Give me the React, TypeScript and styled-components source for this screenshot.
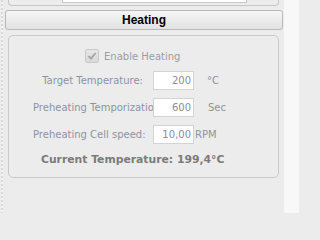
import React from "react";
import styled, { createGlobalStyle } from "styled-components";

const Global = createGlobalStyle`
  html, body { margin: 0; padding: 0; background: #ececec; }
  body { width: 299px; height: 213px; overflow: hidden; font-family: "DejaVu Sans", "Liberation Sans", sans-serif; }
`;

const Screen = styled.div`
  display: flex;
  width: 299px;
  height: 213px;
`;

const DottedStrip = styled.div`
  width: 4px;
  flex: none;
  background-image: repeating-linear-gradient(
    to bottom,
    #d8d8d8 0px,
    #d8d8d8 2px,
    #f4f4f4 2px,
    #f4f4f4 4px
  );
  background-size: 2px 4px;
  background-repeat: repeat-y;
  background-position: 1px 0;
`;

const Main = styled.div`
  width: 280px;
  flex: none;
  display: flex;
  flex-direction: column;
  background: #ececec;
`;

const RightStrip = styled.div`
  flex: 1;
  background: #f8f8f8;
`;

const TopPanel = styled.div`
  margin-left: 4px;
  width: 269px;
  height: 5px;
  border: 1px solid #c6c6c6;
  border-top: none;
  border-radius: 0 0 4px 4px;
  display: flex;
`;

const TopField = styled.div`
  margin-left: 53px;
  width: 183px;
  height: 2px;
  background: #fff;
  border: 1px solid #c8c8c8;
  border-top: none;
`;

const HeaderButton = styled.div`
  margin-top: 4px;
  margin-left: 1px;
  width: 276px;
  height: 18px;
  border: 1px solid #b9b9b9;
  border-radius: 3px;
  background: linear-gradient(to bottom, #f6f6f6 0%, #ececec 50%, #e2e2e2 100%);
  display: flex;
  align-items: center;
  justify-content: center;
  font-family: "Liberation Sans", Arial, sans-serif;
  font-weight: bold;
  font-size: 12px;
  color: #000;
`;

const Group = styled.div`
  margin-top: 5px;
  margin-left: 4px;
  width: 269px;
  height: 141px;
  border: 1px solid #c9c9c9;
  border-radius: 5px;
  display: flex;
  flex-direction: column;
  align-items: stretch;
`;

const CheckRow = styled.label`
  margin-top: 13px;
  margin-left: 76px;
  display: flex;
  align-items: center;
  gap: 5px;
  font-size: 10px;
  color: #9a9ca6;
  height: 14px;
`;

const Check = styled.span`
  width: 12px;
  height: 12px;
  border: 1px solid #c9c9c9;
  border-radius: 2px;
  background: linear-gradient(to bottom, #e6e6e6, #d9d9d9);
  display: flex;
  align-items: center;
  justify-content: center;
`;

const Rows = styled.div`
  margin-top: 8px;
  display: flex;
  flex-direction: column;
  gap: 8px;
`;

const Row = styled.div`
  display: flex;
  align-items: center;
  height: 19px;
`;

const Label = styled.span`
  margin-left: 24px;
  width: 110px;
  padding-right: 10px;
  flex: none;
  overflow: hidden;
  text-align: right;
  white-space: nowrap;
  font-size: 10px;
  color: #8c92a3;
`;

const Field = styled.div`
  width: 37px;
  height: 17px;
  flex: none;
  background: #fff;
  border: 1px solid #d3d3d3;
  display: flex;
  align-items: center;
  justify-content: flex-end;
  padding-right: 2px;
  font-size: 10px;
  color: #8f8c9c;
`;

const Unit = styled.span<{ $gap: number }>`
  margin-left: ${(p) => p.$gap}px;
  font-size: 10px;
  color: #8c92a3;
  white-space: nowrap;
`;

const Current = styled.div`
  margin-top: 9px;
  margin-left: 32px;
  font-size: 10.8px;
  font-weight: bold;
  color: #7b7b7b;
  white-space: nowrap;
`;

const rows = [
  { label: "Target Temperature:", value: "200", unit: "°C", gap: 13 },
  { label: "Preheating Temporization:", value: "600", unit: "Sec", gap: 14 },
  { label: "Preheating Cell speed:", value: "10,00", unit: "RPM", gap: 1 },
];

export default function App() {
  return (
    <>
      <Global />
      <Screen>
        <DottedStrip />
        <Main>
          <TopPanel>
            <TopField />
          </TopPanel>
          <HeaderButton>Heating</HeaderButton>
          <Group>
            <CheckRow>
              <Check>
                <svg width="10" height="10" viewBox="0 0 10 10">
                  <path d="M1.5 5.2 L4 7.6 L8.6 2" fill="none" stroke="#a3a3a3" strokeWidth="1.8" />
                </svg>
              </Check>
              Enable Heating
            </CheckRow>
            <Rows>
              {rows.map((r) => (
                <Row key={r.label}>
                  <Label>{r.label}</Label>
                  <Field>{r.value}</Field>
                  <Unit $gap={r.gap}>{r.unit}</Unit>
                </Row>
              ))}
            </Rows>
            <Current>Current Temperature: 199,4°C</Current>
          </Group>
        </Main>
        <RightStrip />
      </Screen>
    </>
  );
}
